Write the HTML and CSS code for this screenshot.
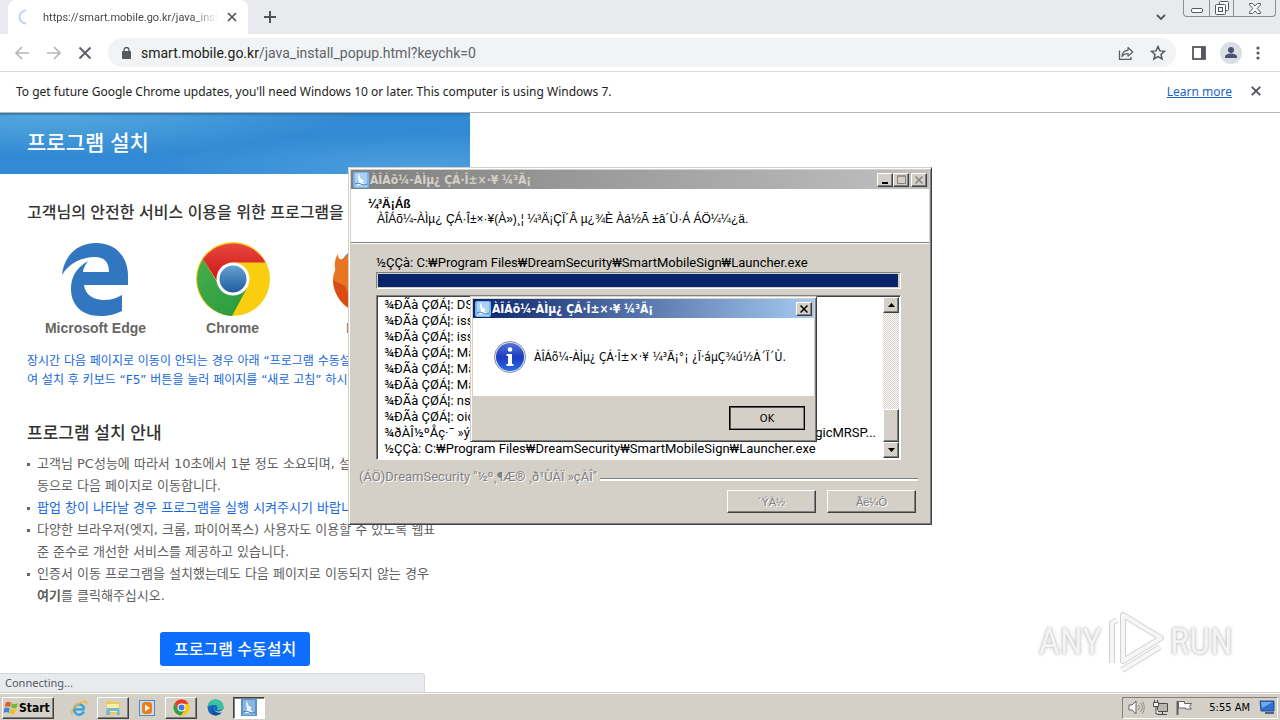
FILE: index.html
```html
<!DOCTYPE html>
<html lang="ko">
<head>
<meta charset="utf-8">
<title>프로그램 설치</title>
<link rel="stylesheet" href="styles.css">
</head>
<body>
<div class="desktop">
  <main class="browser">
    <header class="tabstrip">
      <div class="tab">
        <svg class="spinner" width="16" height="16" viewBox="0 0 16 16"><path d="M8 1.5a6.5 6.500 0 0 0 0 13" fill="none" stroke="#c3d0f2" stroke-width="2"/></svg>
        <span class="tab-title">https://smart.mobile.go.kr/java_inst</span>
        <button class="icon-btn" aria-label="Close tab"><svg width="10" height="10" viewBox="0 0 10 10"><path d="M1 1l8 8M9 1L1 9" stroke="#50545a" stroke-width="1.7"/></svg></button>
      </div>
      <button class="icon-btn new-tab" aria-label="New tab"><svg width="12" height="12" viewBox="0 0 12 12"><path d="M6 0v12M0 6h12" stroke="#50545a" stroke-width="2"/></svg></button>
      <button class="icon-btn tab-search" aria-label="Search tabs"><svg width="10" height="7" viewBox="0 0 10 7"><path d="M1 1l4 4 4-4" fill="none" stroke="#50545a" stroke-width="1.8"/></svg></button>
      <div class="caption">
        <button class="cap-btn" aria-label="Minimize"><svg width="12" height="5" viewBox="0 0 12 5"><rect x=".5" y=".5" width="11" height="4" rx="1.500" fill="#fff" stroke="#55585c"/></svg></button>
        <button class="cap-btn cap-restore" aria-label="Restore"><svg width="14" height="14" viewBox="0 0 14 14"><path d="M4.500 3.500V1.500q0-1 1-1h7q1 0 1 1v7q0 1-1 1h-2" fill="#fff" stroke="#55585c"/><rect x=".5" y="3.500" width="10" height="10" rx="1" fill="#fff" stroke="#55585c"/><rect x="3.500" y="6.500" width="4" height="4" fill="#e8eaed" stroke="#55585c"/></svg></button>
        <button class="cap-btn cap-close" aria-label="Close"><svg width="12" height="11" viewBox="0 0 12 11"><path d="M.6.5h3L6 3 8.400.5h3v1.500L8.200 5.500l3.200 3.500v1.500h-3L6 8l-2.400 2.500h-3V9l3.200-3.500L.6 2z" fill="#fff" stroke="#55585c"/></svg></button>
      </div>
    </header>
    <nav class="toolbar">
      <button class="icon-btn" aria-label="Back"><svg width="16" height="14" viewBox="0 0 16 14"><path d="M15 7H2M8 1L2 7l6 6" fill="none" stroke="#b4b6b9" stroke-width="1.700"/></svg></button>
      <button class="icon-btn" aria-label="Forward"><svg width="16" height="14" viewBox="0 0 16 14"><path d="M1 7h13M8 1l6 6-6 6" fill="none" stroke="#b4b6b9" stroke-width="1.700"/></svg></button>
      <button class="icon-btn" aria-label="Stop"><svg width="14" height="14" viewBox="0 0 14 14"><path d="M1.500 1.500l11 11M12.500 1.500l-11 11" stroke="#5a5d61" stroke-width="1.900"/></svg></button>
      <div class="omnibox">
        <svg width="9" height="12" viewBox="0 0 9 12"><rect y="4" width="9" height="8" rx="1" fill="#55585c"/><path d="M2 5V3a2.500 2.500 0 0 1 5 0v2" fill="none" stroke="#55585c" stroke-width="1.300"/></svg>
        <span class="url">smart.mobile.go.kr<span class="url-path">/java_install_popup.html?keychk=0</span></span>
        <button class="icon-btn" aria-label="Share"><svg width="16" height="14" viewBox="0 0 16 14"><path d="M1.500 4.500v9h11.500v-2.500" fill="none" stroke="#5a5d61" stroke-width="1.300"/><path d="M4 10.500C4.300 6.500 6.500 4.500 10 4.300V1.500L14.800 6 10 10V7.500C7.300 7.500 5.500 8.500 4 10.500z" fill="none" stroke="#5a5d61" stroke-width="1.200" stroke-linejoin="round"/></svg></button>
        <button class="icon-btn" aria-label="Bookmark"><svg width="16" height="16" viewBox="0 0 16 16"><path d="M8 1.600l1.900 4.300 4.700.4-3.600 3.100 1.100 4.600L8 11.600 3.900 14 5 9.400 1.400 6.300l4.700-.4z" fill="none" stroke="#55585c" stroke-width="1.500"/></svg></button>
      </div>
      <div class="tools">
        <button class="icon-btn" aria-label="Side panel"><svg width="14" height="14" viewBox="0 0 14 14"><rect x="1" y="1" width="12" height="12" fill="none" stroke="#55585c" stroke-width="1.800"/><path d="M9 1h4v12H9z" fill="#55585c"/></svg></button>
        <button class="icon-btn" aria-label="Profile"><svg width="22" height="22" viewBox="0 0 22 22"><circle cx="11" cy="11" r="11" fill="#dadde4"/><circle cx="11" cy="8" r="3" fill="#475370"/><path d="M5 16v-1.500c0-2 4-3 6-3s6 1 6 3V16z" fill="#475370"/></svg></button>
        <button class="icon-btn" aria-label="Menu"><svg width="4" height="14" viewBox="0 0 4 14"><circle cx="2" cy="2" r="1.600" fill="#55585c"/><circle cx="2" cy="7" r="1.600" fill="#55585c"/><circle cx="2" cy="12" r="1.600" fill="#55585c"/></svg></button>
      </div>
    </nav>
    <div class="infobar">
      <span class="info-text">To get future Google Chrome updates, you'll need Windows 10 or later. This computer is using Windows 7.</span>
      <a class="learn" href="#">Learn more</a>
      <button class="icon-btn" aria-label="Dismiss"><svg width="10" height="10" viewBox="0 0 10 10"><path d="M.8.8l8.400 8.400M9.200.8L.8 9.200" stroke="#50545a" stroke-width="1.900"/></svg></button>
    </div>
    <section class="page">
      <h1 class="banner">프로그램 설치</h1>
      <div class="content">
        <h2 class="lead">고객님의 안전한 서비스 이용을 위한 프로그램을</h2>
        <div class="browsers">
          <figure class="brand">
            <svg width="68" height="73" viewBox="0 0 68 73"><path fill="#3176be" d="M0 32C2 13 15 0 34 0c20 0 32 14 32 33v9H22c1 10 10 15 20 15 7 0 13-2 18-5v16c-6 3-13 5-22 5C20 73 9 62 9 46 9 34 14 25 26 18c-3 4-5 8-5 11h26c0-10-5-15-14-15C20 14 7 20 0 32z"/></svg>
            <figcaption>Microsoft Edge</figcaption>
          </figure>
          <figure class="brand">
            <svg width="74" height="74" viewBox="0 0 74 74"><defs><linearGradient id="cr" x2="0" y2="1"><stop stop-color="#e8463f"/><stop offset="1" stop-color="#cb1717"/></linearGradient><linearGradient id="cb" x2="0" y2="1"><stop stop-color="#669fd2"/><stop offset="1" stop-color="#1f5d9e"/></linearGradient><linearGradient id="cg" x2="1" y2="1"><stop stop-color="#48ad4c"/><stop offset="1" stop-color="#279b3d"/></linearGradient></defs><circle cx="37" cy="37" r="37" fill="#f8ce0e"/><path d="M7 17A37 37 0 0 0 36 74L51 46 22 42z" fill="url(#cg)"/><path d="M7 17a37 37 0 0 1 62.500 3.500H37L21 39z" fill="url(#cr)"/><circle cx="37" cy="37" r="16.500" fill="#fff"/><circle cx="37" cy="37" r="13.500" fill="url(#cb)"/></svg>
            <figcaption>Chrome</figcaption>
          </figure>
          <figure class="brand">
            <svg width="74" height="74" viewBox="0 0 74 74"><circle cx="37" cy="37" r="34" fill="#1c8ee0"/><path d="M5 12c0 5 2 6 5 5 4-5 8-7 14-9-4 7-3 12 4 14L18 38c4 12 18 15 30 8L44 68C20 74 0 58 0 38 0 31 3 29 2 26 1 20 3 15 5 12z" fill="#e87522"/><path d="M0 38c1 16 10 28 24 32L12 44z" fill="#d94d12"/></svg>
            <figcaption>Firefox</figcaption>
          </figure>
        </div>
        <p class="hint">장시간 다음 페이지로 이동이 안되는 경우 아래 “프로그램 수동설<br>여 설치 후 키보드 “F5” 버튼을 눌러 페이지를 “새로 고침” 하시기</p>
        <h2 class="guide">프로그램 설치 안내</h2>
        <ul class="notes">
          <li>고객님 PC성능에 따라서 10초에서 1분 정도 소요되며, 설치<br>동으로 다음 페이지로 이동합니다.</li>
          <li class="blue">팝업 창이 나타날 경우 프로그램을 실행 시켜주시기 바랍니</li>
          <li>다양한 브라우저(엣지, 크롬, 파이어폭스) 사용자도 이용할 수 있도록 웹표<br>준 준수로 개선한 서비스를 제공하고 있습니다.</li>
          <li>인증서 이동 프로그램을 설치했는데도 다음 페이지로 이동되지 않는 경우<br><b>여기</b>를 클릭해주십시오.</li>
        </ul>
        <button class="install">프로그램 수동설치</button>
      </div>
      <div class="status">Connecting...</div>
    </section>
    <div class="watermark" aria-label="ANY RUN">
      <span>ANY</span>
      <svg width="56" height="64" viewBox="0 0 56 64"><g fill="none" stroke-linejoin="round"><g stroke="#d2d2d2" stroke-width="6"><path d="M15 5v46l38-23z"/><path d="M9 10L4 13v40M14 60l38-23"/></g><g stroke="#f6f6f6" stroke-width="4"><path d="M15 5v46l38-23z"/><path d="M9 10L4 13v40M14 60l38-23"/></g></g></svg>
      <span>RUN</span>
    </div>
  </main>

  <section class="window installer">
    <header class="titlebar inactive">
      <svg class="app-icon" width="16" height="16" viewBox="0 0 16 16"><rect width="16" height="16" rx="2" fill="#77b4e8"/><path d="M2 1h12v14H2z" fill="#a9d2f5"/><path d="M6 1l1 5 4 3-2 1 4 3H4l2-3-1-5z" fill="#fff"/><path d="M2 12q3-2 6 0t6 0" stroke="#3f7fc4" fill="none"/></svg>
      <span class="title">ÀÎÁõ¼-ÀÌµ¿ ÇÁ·Î±×·¥ ¼³Ä¡</span>
      <div class="win-buttons">
        <button class="wbtn" aria-label="Minimize"><svg width="8" height="8" viewBox="0 0 8 8"><path d="M1 6h6v2H1z"/></svg></button>
        <button class="wbtn" aria-label="Maximize"><svg width="9" height="9" viewBox="0 0 9 9"><path d="M.5 1h8v7.500h-8zM0 1h9" fill="none" stroke="#858179"/></svg></button>
        <button class="wbtn wbtn-close" aria-label="Close"><svg width="8" height="8" viewBox="0 0 8 8"><path d="M.5.5l7 7M7.500.5l-7 7" stroke="#858179" stroke-width="1.400"/></svg></button>
      </div>
    </header>
    <div class="step">
      <strong>¼³Ä¡Áß</strong>
      <span>ÀÎÁõ¼-ÀÌµ¿ ÇÁ·Î±×·¥(À»)¸¦ ¼³Ä¡ÇÏ´Â µ¿¾È Àá½Ã ±â´Ù·Á ÁÖ¼¼¿ä.</span>
    </div>
    <div class="work">
      <div class="current">½ÇÇà: C:₩Program Files₩DreamSecurity₩SmartMobileSign₩Launcher.exe</div>
      <div class="progress"><div class="bar"></div></div>
      <div class="log">
        <div class="rows">
          <div>¾ÐÃà ÇØÁ¦: DS</div>
          <div>¾ÐÃà ÇØÁ¦: iss</div>
          <div>¾ÐÃà ÇØÁ¦: iss</div>
          <div>¾ÐÃà ÇØÁ¦: Ma</div>
          <div>¾ÐÃà ÇØÁ¦: Ma</div>
          <div>¾ÐÃà ÇØÁ¦: Ma</div>
          <div>¾ÐÃà ÇØÁ¦: ns</div>
          <div>¾ÐÃà ÇØÁ¦: oic</div>
          <div class="split"><span>¾ðÀÎ½ºÅç·¯ »ý¼º</span><span>gicMRSP...</span></div>
          <div>½ÇÇà: C:₩Program Files₩DreamSecurity₩SmartMobileSign₩Launcher.exe</div>
        </div>
        <div class="scroll">
          <button class="sbtn" aria-label="Scroll up"><svg width="7" height="4" viewBox="0 0 7 4"><path d="M0 4l3.500-4L7 4z"/></svg></button>
          <div class="track"><div class="thumb"></div></div>
          <button class="sbtn" aria-label="Scroll down"><svg width="7" height="4" viewBox="0 0 7 4"><path d="M0 0l3.500 4L7 0z"/></svg></button>
        </div>
      </div>
    </div>
    <div class="vendor"><span>(ÁÖ)DreamSecurity "½º¸¶Æ® ¸ð¹ÙÀÏ »çÀÎ"</span></div>
    <div class="actions">
      <button class="btn" disabled>´ÝÀ½</button>
      <button class="btn" disabled>Ãë¼Ò</button>
    </div>
  </section>

  <section class="window message" role="dialog">
    <header class="titlebar">
      <svg class="app-icon" width="16" height="16" viewBox="0 0 16 16"><rect width="16" height="16" rx="2" fill="#77b4e8"/><path d="M2 1h12v14H2z" fill="#a9d2f5"/><path d="M6 1l1 5 4 3-2 1 4 3H4l2-3-1-5z" fill="#fff"/><path d="M2 12q3-2 6 0t6 0" stroke="#3f7fc4" fill="none"/></svg>
      <span class="title">ÀÎÁõ¼-ÀÌµ¿ ÇÁ·Î±×·¥ ¼³Ä¡</span>
      <button class="wbtn" aria-label="Close"><svg width="8" height="8" viewBox="0 0 8 8"><path d="M.5.5l7 7M7.500.5l-7 7" stroke="#000" stroke-width="1.500"/></svg></button>
    </header>
    <div class="msg-body">
      <svg width="32" height="32" viewBox="0 0 32 32"><defs><linearGradient id="ib" x2="0" y2="1"><stop stop-color="#5574d8"/><stop offset=".5" stop-color="#1c3cc0"/><stop offset="1" stop-color="#2a6ae4"/></linearGradient></defs><circle cx="16" cy="16" r="15.500" fill="#e6e9ef" stroke="#85909f"/><circle cx="16" cy="16" r="14" fill="url(#ib)"/><circle cx="16" cy="8.500" r="2.300" fill="#fff"/><path d="M12.500 13h5.500v10h1.500v2h-7v-2H14v-8h-1.500z" fill="#fff"/></svg>
      <span>ÀÎÁõ¼-ÀÌµ¿ ÇÁ·Î±×·¥ ¼³Ä¡°¡ ¿Ï·áµÇ¾ú½À´Ï´Ù.</span>
    </div>
    <div class="msg-foot"><button class="btn ok">OK</button></div>
  </section>

  <footer class="taskbar">
    <button class="start"><svg width="16" height="16" viewBox="0 0 18 16"><path d="M3 2q3-2 6 0L8 7Q5 5 2 7z" fill="#e65b23"/><path d="M10 2.500q3 2 7 0L15.500 7.500q-3 2-6.500 0z" fill="#7ab83a"/><path d="M1.500 8.500q3-2 6 0l-1 5q-3-2-6 0z" fill="#3b87d8"/><path d="M8.500 9q3 2 6.500 0l-1.500 5q-3 2-6 0z" fill="#f6bd1c"/></svg>Start</button>
    <button class="task flat" aria-label="Internet Explorer"><svg width="18" height="16" viewBox="0 0 18 16"><path d="M14.500 9.500H4.800M14 11.500A5.200 5.200 0 1 1 14.300 8.500" fill="none" stroke="#39a3e0" stroke-width="2.500"/><path d="M2.500 14.500C-1 13 6 2 15 1.500c2-.1 2 1.500 1 3" fill="none" stroke="#efb92c" stroke-width="1.300"/></svg></button>
    <button class="task" aria-label="Explorer"><svg width="18" height="17" viewBox="0 0 18 17"><path d="M2 2h5l1 1h8v12H2z" fill="#ecc95d"/><path d="M3 5h12v8H3z" fill="#fbeea8"/><path d="M3 9h12l1 7h-3v-4H6v4H2z" fill="#72b9df"/></svg></button>
    <button class="task flat" aria-label="Media Player"><svg width="16" height="16" viewBox="0 0 16 16"><rect x=".5" y=".5" width="15" height="15" fill="#c9e1f5" stroke="#5488b7"/><rect x="3" y="2" width="10" height="12" rx="3" fill="#f27b13"/><path d="M6 4.500l5 3.500-5 3.500z" fill="#fff"/></svg></button>
    <button class="task" aria-label="Chrome"><svg width="17" height="17" viewBox="0 0 18 18"><circle cx="9" cy="9" r="8.500" fill="#f9c80e"/><path d="M1.500 5A8.500 8.500 0 0 0 8.500 17.500l4-6.500L5 10z" fill="#2c9f49"/><path d="M1.500 5a8.500 8.500 0 0 1 15 0H9l-4 5z" fill="#e33b2e"/><circle cx="9" cy="9" r="4.200" fill="#fff"/><circle cx="9" cy="9" r="3.200" fill="#3a7ce8"/></svg></button>
    <button class="task flat" aria-label="Edge"><svg width="17" height="17" viewBox="0 0 17 17"><circle cx="8.500" cy="8.500" r="8" fill="#1668bd"/><path d="M.6 8C1 3 5 .5 8.500.5c5 0 8 3.500 8 7 0 4-5 4.500-6.500 3 1-1 1-4-2.500-4.500C4 5.500 1 7 .6 8z" fill="#36c3a0"/><path d="M6 8c-1 4 3 7 8 5.500-1 1.500-3 2.500-5 3C4 16.500 3.500 10 6 8z" fill="#0f4e9d"/><path d="M7.500 8q-1 3 3 4.500 4 .5 6-3v3l-2 1Q7 14.500 7.500 8z" fill="#d6d2cb"/></svg></button>
    <button class="task active" aria-label="Installer"><svg width="16" height="17" viewBox="0 0 16 17"><rect width="16" height="17" fill="#5c93c9"/><path d="M2 1h12v15H2z" fill="#88b6e0"/><path d="M6 1l1 5 4 3-2 1 4 4H4l2-4-1-5z" fill="#eef6fd"/><path d="M2 13q3-2 6 0t6 0" stroke="#3f7fc4" fill="none"/></svg></button>
    <div class="tray">
      <svg width="17" height="15" viewBox="0 0 17 15"><path d="M1 5h3l4-4v13l-4-4H1z" fill="#fff" stroke="#65625e"/><path d="M10.500 5q2 2.500 0 5M12.500 3q3.500 4.500 0 9M14.500 1.500q3.500 6 0 12" fill="none" stroke="#8e8b86"/></svg>
      <svg width="17" height="16" viewBox="0 0 17 16"><path d="M5.500 3.500h10v8h-10z" fill="#b8b5b0" stroke="#4c4a47"/><path d="M10.500 12v2M6 14.500h9" stroke="#4c4a47"/><path d="M1.500 2.500h5v4h-5zM2.500 0v2M5.500 0v2M4 7v7h3" fill="#fff" stroke="#4c4a47"/></svg>
      <svg width="17" height="16" viewBox="0 0 17 16"><path d="M1.500 1v14" stroke="#65625e" stroke-width="2"/><path d="M2.500 1.500h6v2h7l-2 3 2 2.500h-6V8h-7z" fill="#fff" stroke="#65625e"/></svg>
      <time>5:55 AM</time>
      <svg width="17" height="15" viewBox="0 0 17 15"><path d="M1 1h14v10H2z" fill="#2f6fd0" stroke="#224d8d"/><path d="M2 2h12L3 8z" fill="#73a9ea"/><path d="M6 13h9" stroke="#51657e" stroke-width="2"/></svg>
    </div>
  </footer>
</div>
</body>
</html>
```
FILE: styles.css
```css
* { box-sizing: border-box; }
body {
  margin: 0;
  font-family: "DejaVu Sans Condensed", "Noto Sans CJK KR", sans-serif;
  font-size: 12px;
  color: #222;
  white-space: nowrap;
}
button { font: inherit; color: inherit; margin: 0; }
h1, h2, p, ul, figure { margin: 0; padding: 0; }
svg { display: block; flex: none; }

.desktop {
  position: relative;
  display: flex;
  flex-direction: column;
  min-height: 100vh;
  overflow: hidden;
}
.icon-btn {
  display: grid;
  place-items: center;
  padding: 0;
  border: 0;
  background: none;
}

/* browser chrome */
.browser { position: relative; flex: 1; display: flex; flex-direction: column; background: #fff; }
.tabstrip { display: flex; align-items: stretch; height: 34px; padding-left: 8px; background: #e8eaed; }
.tab {
  display: flex;
  align-items: center;
  gap: 9px;
  width: 240px;
  padding: 0 11px 0 10px;
  background: #fff;
  border-radius: 8px 8px 0 0;
}
.tab-title {
  flex: 1;
  overflow: hidden;
  font-family: Roboto, sans-serif;
  font-size: 11px;
  color: #45494d;
  mask-image: linear-gradient(90deg, #000 85%, transparent);
}
.new-tab { margin-left: 16px; }
.tab-search { margin-left: auto; }
.caption {
  display: flex;
  width: 93px;
  height: 17px;
  margin: 0 4px 0 17px;
  border: 1px solid #8b8e92;
  border-top: 0;
  border-radius: 0 0 4px 4px;
}
.cap-btn { display: grid; place-items: center; width: 25px; padding: 0; border: 0; background: none; }
.cap-btn:first-child { align-items: end; padding-bottom: 3px; }
.cap-restore { border: solid #8b8e92; border-width: 0 1px; }
.cap-close { flex: 1; }

.toolbar {
  display: flex;
  align-items: center;
  gap: 16px;
  height: 38px;
  padding: 0 20px 0 14px;
  border-bottom: 1px solid #d8dadd;
}
.omnibox {
  flex: 1;
  display: flex;
  align-items: center;
  gap: 16px;
  height: 29px;
  padding: 0 10px 0 14px;
  border-radius: 15px;
  background: #f1f3f4;
}
.url { flex: 1; margin-left: -6px; font-family: Roboto, sans-serif; font-size: 14px; }
.url-path { color: #5f6368; }
.tools { display: grid; grid-template-columns: 14px 50px 4px; align-items: center; }

.infobar {
  display: flex;
  align-items: center;
  height: 41px;
  padding: 0 19px 2px 16px;
  border-bottom: 1px solid #b5b8bb;
  font-family: "Noto Sans", sans-serif;
}
.info-text { flex: 1; }
.learn { margin-right: 19px; color: #1a62c5; }

/* web page */
.page { flex: 1; display: flex; flex-direction: column; align-items: flex-start; font-family: "DejaVu Sans", "Noto Sans CJK KR", sans-serif; }
.banner {
  width: 470px;
  padding: 12px 27px 16px;
  font: 500 21px/33px "Noto Sans CJK KR", sans-serif;
  color: #fff;
  background:
    linear-gradient(#2f6fa5, transparent 3px),
    radial-gradient(ellipse at 10% 0, #55a8dd, transparent 50%),
    radial-gradient(ellipse at 90% 90%, #4d9fdd, transparent 45%),
    #338ad4;
}
.content { width: 470px; padding: 24px 27px 7px; }
.lead { font: 500 16px/26px "Noto Sans CJK KR", sans-serif; color: #333; }
.browsers { display: flex; margin-top: 18px; }
.brand {
  display: flex;
  flex-direction: column;
  align-items: center;
  justify-content: flex-end;
  gap: 4px;
  width: 137px;
  font: bold 14px/16px "Liberation Sans", sans-serif;
  color: #666;
}
.hint { margin-top: 16px; font-size: 12px; line-height: 19px; color: #1668e0; }
.guide { margin-top: 29px; font: 500 17px/26px "Noto Sans CJK KR", sans-serif; color: #333; }
.notes { margin-top: 8px; list-style: none; font-size: 13px; line-height: 22px; color: #606060; }
.notes li { display: block; padding-left: 10px; background: linear-gradient(#666, #666) 0 10px / 3px 3px no-repeat; }
.notes .blue { color: #1668e0; }
.install {
  display: block;
  margin: 25px 0 0 133px;
  padding: 3px 14px 5px;
  border: 0;
  border-radius: 3px;
  background: #0d6efd;
  color: #fff;
  font: 500 16px/26px "Noto Sans CJK KR", sans-serif;
}
.status {
  width: 425px;
  height: 19px;
  margin-top: auto;
  padding-left: 5px;
  border: 1px solid #d4d7da;
  border-width: 1px 1px 0 0;
  border-radius: 0 4px 0 0;
  background: #e8eaed;
  color: #55595e;
  font: 11px/18px "Noto Sans", sans-serif;
}
.watermark {
  position: absolute;
  right: 47px;
  bottom: 18px;
  display: flex;
  align-items: center;
  gap: 6px;
  font: 37px/64px "Liberation Sans Narrow", "Roboto Condensed", "DejaVu Sans Condensed", sans-serif;
  color: #f4f4f4;
  text-shadow: 0 0 2px #b4b4b4, 0 0 4px #d0d0d0;
}

/* classic windows */
.window {
  position: absolute;
  display: flex;
  flex-direction: column;
  padding: 2px;
  border: 1px solid;
  border-color: #d4d0c8 #404040 #404040 #d4d0c8;
  background: #d4d0c8;
  box-shadow: inset 1px 1px #fff, inset -1px -1px #808080;
  color: #000;
}
.installer { left: 348px; top: 167px; width: 584px; font-family: "Liberation Sans", "Noto Sans CJK KR", sans-serif; }
.message { left: 470px; top: 296px; width: 347px; }
.titlebar {
  display: flex;
  align-items: center;
  gap: 1px;
  height: 19px;
  padding: 0 2px;
  background: linear-gradient(90deg, #0a246a, #a6caf0);
  color: #fff;
  font: bold 12px/18px "DejaVu Sans Condensed", sans-serif;
}
.inactive { background: linear-gradient(90deg, #808080, #c0c0c0); color: #d4d0c8; }
.title { flex: 1; }
.win-buttons { display: flex; }
.wbtn, .sbtn, .btn, .thumb {
  display: grid;
  place-items: center;
  padding: 0;
  border: 1px solid;
  border-color: #fff #404040 #404040 #fff;
  background: #d4d0c8;
  box-shadow: inset -1px -1px #808080;
}
.wbtn { width: 16px; height: 14px; }
.wbtn-close { margin-left: 2px; }
.step {
  display: flex;
  flex-direction: column;
  height: 54px;
  padding: 8px 17px;
  border-bottom: 1px solid #808080;
  background: #fff;
  line-height: 15px;
}
.step strong { font-size: 12px; }
.step span { padding-left: 9px; }
.work {
  padding: 11px 28px 0 25px;
  border-top: 1px solid #fff;
  font: 13px/16px Roboto, "Liberation Sans", sans-serif;
}
.current { height: 17px; }
.progress { height: 17px; padding: 1px 2px 1px 1px; border: 1px solid; border-color: #808080 #fff #fff #808080; }
.bar { height: 100%; background: #0a246a; }
.log {
  display: flex;
  margin-top: 6px;
  border: 1px solid;
  border-color: #808080 #fff #fff #808080;
  box-shadow: inset 1px 1px #404040;
  background: #fff;
  padding: 1px;
}
.rows { flex: 1; padding: 0 7px 1px 6px; }
.split { display: flex; justify-content: space-between; }
.scroll { display: flex; flex-direction: column; width: 16px; }
.sbtn { width: 16px; height: 16px; }
.track {
  flex: 1;
  display: flex;
  align-items: flex-end;
  background: repeating-conic-gradient(#fff 0 25%, #d4d0c8 0 50%) 0 0 / 2px 2px;
}
.thumb { width: 16px; height: 33px; }
.vendor {
  display: flex;
  align-items: center;
  gap: 3px;
  margin-top: 9px;
  padding: 0 11px 0 8px;
  color: #808080;
  font: 13px/16px Roboto, "Liberation Sans", sans-serif;
  text-shadow: 1px 1px #fff;
}
.vendor::after { content: ""; flex: 1; height: 2px; margin-top: 5px; border-top: 1px solid #808080; background: #fff; }
.actions { display: flex; justify-content: flex-end; gap: 11px; padding: 5px 13px 9px; }
.btn { width: 89px; height: 23px; font-size: 11px; }
.btn:disabled { color: #808080; text-shadow: 1px 1px #fff; }

.msg-body {
  display: flex;
  align-items: center;
  gap: 8px;
  height: 78px;
  padding: 0 21px;
  background: #fff;
  font-size: 12px;
}
.msg-foot { display: flex; justify-content: flex-end; padding: 10px 9px 9px; }
.ok { width: 76px; height: 24px; border-color: #000; box-shadow: inset 1px 1px #55534f, inset -1px -1px #808080; }

/* taskbar */
.taskbar {
  display: flex;
  align-items: center;
  gap: 2px;
  height: 28px;
  padding: 2px 2px 0;
  border-top: 1px solid #d4d0c8;
  box-shadow: inset 0 1px #fff;
  background: #d4d0c8;
  color: #000;
}
.start {
  display: flex;
  align-items: center;
  width: 52px;
  height: 22px;
  padding: 0;
  margin-right: 7px;
  border: 1px solid;
  border-color: #fff #404040 #404040 #fff;
  box-shadow: inset -1px -1px #808080;
  background: #d4d0c8;
  font: bold 12px/18px "DejaVu Sans Condensed", sans-serif;
}
.task {
  display: grid;
  place-items: center;
  width: 32px;
  height: 22px;
  padding: 0;
  border: 1px solid;
  border-color: #fff #404040 #404040 #fff;
  box-shadow: inset -1px -1px #808080;
  background: #d4d0c8;
}
.flat { border-color: transparent; box-shadow: none; }
.active { border-color: #404040 #fff #fff #404040; box-shadow: inset 1px 1px #808080; background: #fff; }
.tray {
  display: flex;
  align-items: center;
  gap: 7px;
  height: 22px;
  margin-left: auto;
  padding: 0 1px 0 5px;
  border: 1px solid;
  border-color: #808080 #fff #fff #808080;
  font-size: 11px;
}
.tray time { margin: 0 2px 0 9px; }
```
